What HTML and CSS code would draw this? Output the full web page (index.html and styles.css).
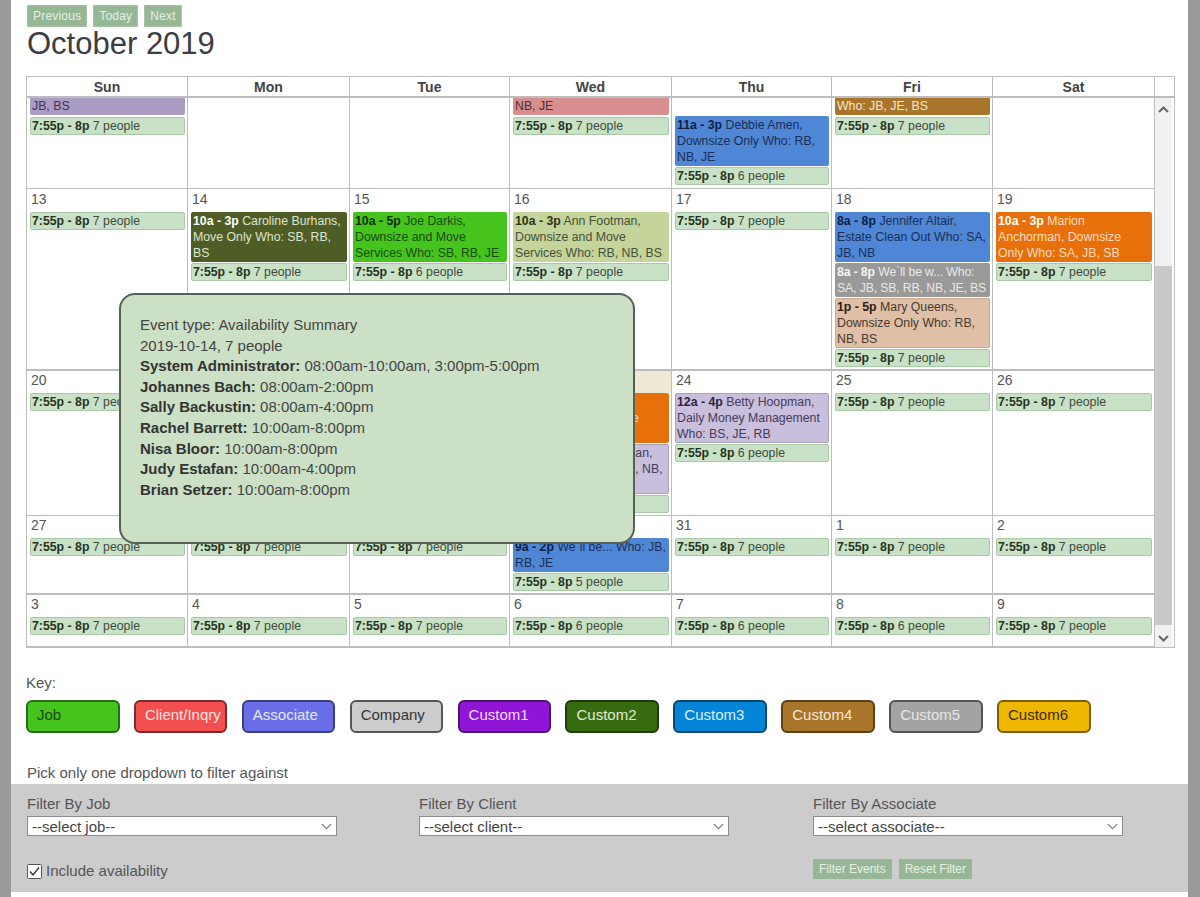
FILE: index.html
```html
<!DOCTYPE html>
<html lang="en">
<head>
<meta charset="utf-8">
<title>October 2019</title>
<link rel="stylesheet" href="styles.css">
</head>
<body>
<div class="page">
  <div class="top">
    <nav class="nav">
      <button class="btn">Previous</button>
      <button class="btn">Today</button>
      <button class="btn">Next</button>
    </nav>
    <h1 class="title">October 2019</h1>
  </div>

  <section class="calendar">
    <div class="head">
      <div class="hcell">Sun</div><div class="hcell">Mon</div><div class="hcell">Tue</div><div class="hcell">Wed</div><div class="hcell">Thu</div><div class="hcell">Fri</div><div class="hcell">Sat</div><div class="hstub"></div>
    </div>
    <div class="body">
      <div class="weeks">
        <div class="week w1">
          <div class="cell"><div class="ev clip purple">JB, BS</div><div class="ev av"><b>7:55p - 8p</b> 7 people</div></div>
          <div class="cell"></div>
          <div class="cell"></div>
          <div class="cell"><div class="ev clip pink">NB, JE</div><div class="ev av"><b>7:55p - 8p</b> 7 people</div></div>
          <div class="cell"><div class="gap"></div><div class="ev blue"><b>11a - 3p</b> Debbie Amen, Downsize Only Who: RB, NB, JE</div><div class="ev av"><b>7:55p - 8p</b> 6 people</div></div>
          <div class="cell"><div class="ev clip brown">Who: JB, JE, BS</div><div class="ev av"><b>7:55p - 8p</b> 7 people</div></div>
          <div class="cell"></div>
        </div>
        <div class="week w2">
          <div class="cell"><div class="num">13</div><div class="ev av"><b>7:55p - 8p</b> 7 people</div></div>
          <div class="cell"><div class="num">14</div><div class="ev olive"><b>10a - 3p</b> Caroline Burhans, Move Only Who: SB, RB, BS</div><div class="ev av"><b>7:55p - 8p</b> 7 people</div></div>
          <div class="cell"><div class="num">15</div><div class="ev green"><b>10a - 5p</b> Joe Darkis, Downsize and Move Services Who: SB, RB, JE</div><div class="ev av"><b>7:55p - 8p</b> 6 people</div></div>
          <div class="cell"><div class="num">16</div><div class="ev sage"><b>10a - 3p</b> Ann Footman, Downsize and Move Services Who: RB, NB, BS</div><div class="ev av"><b>7:55p - 8p</b> 7 people</div></div>
          <div class="cell"><div class="num">17</div><div class="ev av"><b>7:55p - 8p</b> 7 people</div></div>
          <div class="cell"><div class="num">18</div><div class="ev blue"><b>8a - 8p</b> Jennifer Altair, Estate Clean Out Who: SA, JB, NB</div><div class="ev gray"><b>8a - 8p</b> We`ll be w... Who: SA, JB, SB, RB, NB, JE, BS</div><div class="ev tan"><b>1p - 5p</b> Mary Queens, Downsize Only Who: RB, NB, BS</div><div class="ev av"><b>7:55p - 8p</b> 7 people</div></div>
          <div class="cell"><div class="num">19</div><div class="ev orange"><b>10a - 3p</b> Marion Anchorman, Downsize Only Who: SA, JB, SB</div><div class="ev av"><b>7:55p - 8p</b> 7 people</div></div>
        </div>
        <div class="week w3">
          <div class="cell"><div class="num">20</div><div class="ev av"><b>7:55p - 8p</b> 7 people</div></div>
          <div class="cell"><div class="num">21</div><div class="ev av"><b>7:55p - 8p</b> 7 people</div></div>
          <div class="cell"><div class="num">22</div><div class="ev av"><b>7:55p - 8p</b> 7 people</div></div>
          <div class="cell"><div class="num today">23</div><div class="ev orange"><b>10a - 3p</b> Marion A., Downsize and Storage Who: SA</div><div class="ev lav"><b>12a - 4p</b> Betty Hoopman, Daily Money Who: RB, NB, BS</div><div class="ev av"><b>7:55p - 8p</b> 7 people</div></div>
          <div class="cell"><div class="num">24</div><div class="ev lav"><b>12a - 4p</b> Betty Hoopman, Daily Money Management Who: BS, JE, RB</div><div class="ev av"><b>7:55p - 8p</b> 6 people</div></div>
          <div class="cell"><div class="num">25</div><div class="ev av"><b>7:55p - 8p</b> 7 people</div></div>
          <div class="cell"><div class="num">26</div><div class="ev av"><b>7:55p - 8p</b> 7 people</div></div>
        </div>
        <div class="week w4">
          <div class="cell"><div class="num">27</div><div class="ev av"><b>7:55p - 8p</b> 7 people</div></div>
          <div class="cell"><div class="num">28</div><div class="ev av"><b>7:55p - 8p</b> 7 people</div></div>
          <div class="cell"><div class="num">29</div><div class="ev av"><b>7:55p - 8p</b> 7 people</div></div>
          <div class="cell"><div class="num">30</div><div class="ev blue"><b>9a - 2p</b> We`ll be... Who: JB, RB, JE</div><div class="ev av"><b>7:55p - 8p</b> 5 people</div></div>
          <div class="cell"><div class="num">31</div><div class="ev av"><b>7:55p - 8p</b> 7 people</div></div>
          <div class="cell"><div class="num">1</div><div class="ev av"><b>7:55p - 8p</b> 7 people</div></div>
          <div class="cell"><div class="num">2</div><div class="ev av"><b>7:55p - 8p</b> 7 people</div></div>
        </div>
        <div class="week w5">
          <div class="cell"><div class="num">3</div><div class="ev av"><b>7:55p - 8p</b> 7 people</div></div>
          <div class="cell"><div class="num">4</div><div class="ev av"><b>7:55p - 8p</b> 7 people</div></div>
          <div class="cell"><div class="num">5</div><div class="ev av"><b>7:55p - 8p</b> 7 people</div></div>
          <div class="cell"><div class="num">6</div><div class="ev av"><b>7:55p - 8p</b> 6 people</div></div>
          <div class="cell"><div class="num">7</div><div class="ev av"><b>7:55p - 8p</b> 6 people</div></div>
          <div class="cell"><div class="num">8</div><div class="ev av"><b>7:55p - 8p</b> 6 people</div></div>
          <div class="cell"><div class="num">9</div><div class="ev av"><b>7:55p - 8p</b> 7 people</div></div>
        </div>
      </div>
      <div class="scrollbar">
        <svg class="arrow up" width="17" height="18" viewBox="0 0 17 18"><path d="M4 11 L8.5 6.5 L13 11" fill="none" stroke="#666" stroke-width="2"/></svg>
        <div class="track"><div class="thumb"></div></div>
        <svg class="arrow" width="17" height="18" viewBox="0 0 17 18"><path d="M4 7 L8.5 11.5 L13 7" fill="none" stroke="#666" stroke-width="2"/></svg>
      </div>
    </div>
    <div class="tooltip">
      <div>Event type: Availability Summary</div>
      <div>2019-10-14, 7 people</div>
      <div><b>System Administrator:</b> 08:00am-10:00am, 3:00pm-5:00pm</div>
      <div><b>Johannes Bach:</b> 08:00am-2:00pm</div>
      <div><b>Sally Backustin:</b> 08:00am-4:00pm</div>
      <div><b>Rachel Barrett:</b> 10:00am-8:00pm</div>
      <div><b>Nisa Bloor:</b> 10:00am-8:00pm</div>
      <div><b>Judy Estafan:</b> 10:00am-4:00pm</div>
      <div><b>Brian Setzer:</b> 10:00am-8:00pm</div>
    </div>
  </section>

  <section class="key">
    <div class="key-label">Key:</div>
    <div class="key-row">
      <div class="chip k-job">Job</div>
      <div class="chip k-client">Client/Inqry</div>
      <div class="chip k-assoc">Associate</div>
      <div class="chip k-company">Company</div>
      <div class="chip k-c1">Custom1</div>
      <div class="chip k-c2">Custom2</div>
      <div class="chip k-c3">Custom3</div>
      <div class="chip k-c4">Custom4</div>
      <div class="chip k-c5">Custom5</div>
      <div class="chip k-c6">Custom6</div>
    </div>
  </section>

  <p class="pick">Pick only one dropdown to filter against</p>

  <section class="filters">
    <div class="filter-row">
      <div class="field">
        <label class="flabel">Filter By Job</label>
        <div class="selwrap"><select class="sel"><option>--select job--</option></select><svg class="chev" width="11" height="7" viewBox="0 0 11 7"><path d="M0.8 1 L5.5 5.7 L10.2 1" fill="none" stroke="#808080" stroke-width="1.1"/></svg></div>
      </div>
      <div class="field">
        <label class="flabel">Filter By Client</label>
        <div class="selwrap"><select class="sel"><option>--select client--</option></select><svg class="chev" width="11" height="7" viewBox="0 0 11 7"><path d="M0.8 1 L5.5 5.7 L10.2 1" fill="none" stroke="#808080" stroke-width="1.1"/></svg></div>
      </div>
      <div class="field">
        <label class="flabel">Filter By Associate</label>
        <div class="selwrap"><select class="sel"><option>--select associate--</option></select><svg class="chev" width="11" height="7" viewBox="0 0 11 7"><path d="M0.8 1 L5.5 5.7 L10.2 1" fill="none" stroke="#808080" stroke-width="1.1"/></svg></div>
      </div>
    </div>
    <div class="action-row">
      <div class="check">
        <svg class="box" width="15" height="15" viewBox="0 0 15 15"><rect x="0.5" y="0.5" width="14" height="14" rx="1" fill="#fff" stroke="#555"/><path d="M3 7.5 L6 11 L12 3.5" fill="none" stroke="#333" stroke-width="1.4"/></svg>
        <span>Include availability</span>
      </div>
      <div class="actions">
        <button class="btn small">Filter Events</button>
        <button class="btn small">Reset Filter</button>
      </div>
    </div>
  </section>
</div>
</body>
</html>
```
FILE: styles.css
```css
* { box-sizing: border-box; }
html, body { margin: 0; height: 100%; }
body {
  background: #999;
  font-family: "Liberation Sans", Arial, sans-serif;
  color: #444;
  overflow: hidden;
}
.page {
  margin: 0 12px 0 11px;
  height: 897px;
  background: #fff;
}
.top { padding: 5px 0 0 16px; height: 76px; }
.nav { display: flex; gap: 6px; }
.btn {
  height: 22px;
  padding: 0 5px;
  border: 1px solid #a9c4a6;
  background: #95b795;
  color: #e8f0e6;
  font: 12px "Liberation Sans", Arial, sans-serif;
  letter-spacing: 0.2px;
}
.btn.small { height: 20px; border-color: #95b795; letter-spacing: 0; }
.title { margin: 0; font-size: 31px; font-weight: 400; line-height: 34px; color: #3c3c44; }

.calendar {
  position: relative;
  margin-left: 15px;
  width: 1149px;
  height: 572px;
  border: 1px solid #bdbdbd;
  border-bottom-width: 2px;
  --cols: 161px 162px 160px 162px 160px 161px 162px;
}
.head {
  display: grid;
  grid-template-columns: var(--cols) 1fr;
  height: 21px;
  border-bottom: 2px solid #bdbdbd;
}
.hcell {
  border-right: 1px solid #bdbdbd;
  text-align: center;
  font-size: 14px;
  font-weight: 700;
  line-height: 20px;
  color: #444;
}
.body { display: flex; height: 549px; }
.weeks { width: 1128px; display: flex; flex-direction: column; }
.week { display: grid; grid-template-columns: var(--cols); border-bottom: 1px solid #bdbdbd; }
.w1 { height: 91px; }
.w2 { height: 182px; border-bottom-width: 2px; }
.w3 { height: 145px; }
.w4 { height: 79px; border-bottom-width: 2px; }
.w5 { flex: 1; border-bottom: 0; }
.cell { border-right: 1px solid #bdbdbd; min-width: 0; }
.num {
  height: 23px;
  padding: 2px 0 0 4px;
  font-size: 14px;
  line-height: 17px;
  color: #555;
}
.w3 .num, .w4 .num, .w5 .num { height: 22px; padding-top: 1px; }
.num.today { background: #eee8d5; }
.gap { height: 18px; }
.ev {
  margin: 0 2px 1px 3px;
  padding: 0 1px;
  border: 1px solid transparent;
  border-radius: 2px;
  font-size: 12.3px;
  line-height: 16px;
}
.clip { border-top: 0; height: 17px; margin-bottom: 2px; border-radius: 0 0 2px 2px; }
.av { background: #c9e1c6; border-color: #a9c9a6; color: #3f4a3f; }
.av b { color: #27331f; }
.purple { background: #ab9cc4; color: #3c3458; }
.pink { background: #d98f8f; color: #4a3030; }
.brown { background: #a8752a; color: #f4e6d0; }
.blue { background: #4f86d6; color: #1b2f55; }
.blue b { color: #0e1f40; }
.olive { background: #4e5d26; color: #dfe4cf; }
.olive b { color: #fff; }
.green { background: #44c41d; color: #1b4a10; }
.green b { color: #102e08; }
.sage { background: #c4d49a; color: #45503a; }
.sage b { color: #2b3320; }
.gray { background: #999; color: #e8e8e8; letter-spacing: -0.15px; padding-right: 0; }
.gray b { color: #f4f4f4; }
.tan { background: #dfbfa5; color: #4a3a30; border-color: #c9ab93; }
.tan b { color: #2b2018; }
.orange { background: #e8700a; color: #fbdcc0; padding-right: 3px; }
.orange b { color: #fff; }
.lav { background: #c9bedb; color: #443c5a; border-color: #a9a0bb; }
.lav b { color: #2a2440; }

.scrollbar {
  width: 19px;
  background: #f1f1f1;
  border-right: 2px solid #fff;
  display: flex;
  flex-direction: column;
}
.arrow { display: block; flex: none; }
.arrow.up { margin-top: 3px; }
.track { flex: 1; padding-top: 147px; padding-bottom: 4px; }
.thumb { height: 100%; background: #c9c9c9; }

.tooltip {
  position: absolute;
  left: 92px;
  top: 216px;
  width: 516px;
  height: 251px;
  padding: 20px 19px;
  border: 2px solid #566056;
  border-radius: 16px;
  background: #cce0c6;
  font-size: 15px;
  line-height: 20.6px;
  color: #444;
}
.tooltip b { color: #333; }

.key { padding: 26px 0 0 15px; }
.key-label { font-size: 15px; line-height: 18px; color: #555; }
.key-row { display: flex; gap: 14.4px; margin-top: 8px; }
.chip {
  width: 93.5px;
  height: 33px;
  padding-left: 9px;
  border: 2px solid;
  border-radius: 6px;
  font-size: 15px;
  line-height: 26px;
  white-space: nowrap;
}
.k-job { background: #44c41d; border-color: #2a6b1a; color: #1d4a12; }
.k-client { background: #f25050; border-color: #7c2b2b; color: #fbe0e0; }
.k-assoc { background: #6a6ee6; border-color: #3c3f80; color: #e6e6fa; }
.k-company { background: #ccc; border-color: #555; color: #333; }
.k-c1 { background: #9015d6; border-color: #4a1470; color: #f0dcfa; }
.k-c2 { background: #376b10; border-color: #24380f; color: #e2eed4; }
.k-c3 { background: #0484d6; border-color: #0b4670; color: #dceefa; }
.k-c4 { background: #a8752a; border-color: #5c3f14; color: #f6ead6; }
.k-c5 { background: #a3a3a3; border-color: #555; color: #e6e6e6; }
.k-c6 { background: #efb800; border-color: #7a5f00; color: #3b2d00; }

.pick { margin: 31px 0 0 16px; font-size: 15px; line-height: 18px; color: #555; }

.filters {
  margin-top: 2px;
  height: 108px;
  padding: 11px 0 0 16px;
  background: #ccc;
}
.filter-row { display: grid; grid-template-columns: 392px 394px 309px; }
.flabel { display: block; font-size: 15px; line-height: 18px; color: #555; }
.selwrap { position: relative; width: 310px; margin-top: 3px; }
.sel {
  display: block;
  width: 100%;
  height: 20px;
  padding: 0 0 0 4px;
  border: 1px solid #8c8c8c;
  border-radius: 0;
  background: #fff;
  appearance: none;
  font: 15px "Liberation Sans", Arial, sans-serif;
  color: #444;
}
.chev { position: absolute; right: 5px; top: 7px; }
.action-row { display: flex; margin-top: 23px; align-items: flex-start; }
.check { width: 786px; margin-top: 2px; display: flex; align-items: center; gap: 4px; font-size: 15px; line-height: 20px; color: #555; }
.box { flex: none; }
.actions { display: flex; gap: 7px; }
```
